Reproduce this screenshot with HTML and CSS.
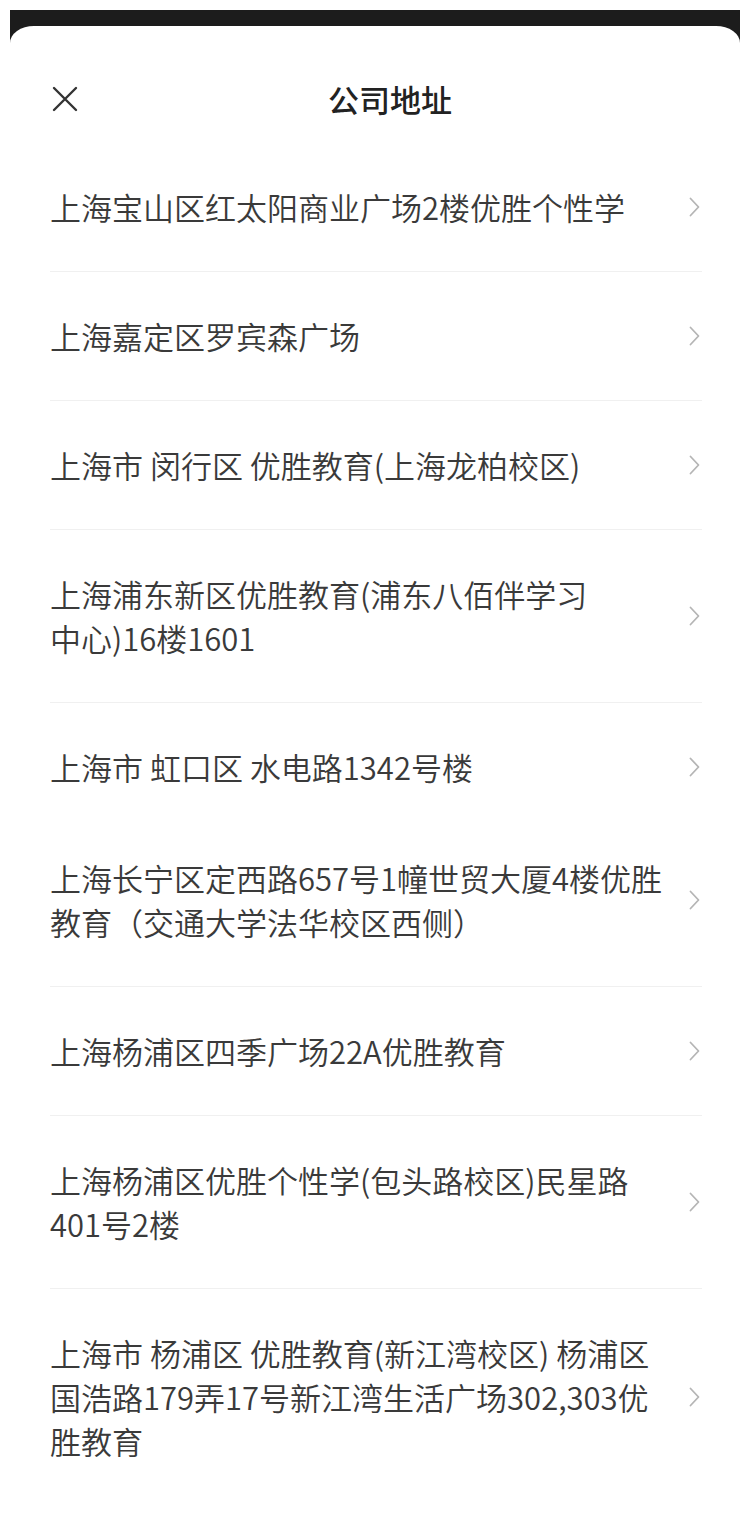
FILE: index.html
```html
<!DOCTYPE html>
<html lang="zh-CN">
<head>
    <meta charset="UTF-8">
    <meta name="viewport" content="width=device-width, initial-scale=1.0">
    <title>公司地址</title>
    <link rel="stylesheet" href="styles.css">
</head>
<body>
    <div class="frame">
        <div class="sheet">
            <div class="header">
                <button class="close-btn" aria-label="关闭">
                    <svg width="26" height="26" viewBox="0 0 26 26">
                        <path d="M2 2 L24 24 M24 2 L2 24" stroke="#333" stroke-width="2.4" stroke-linecap="round" fill="none"/>
                    </svg>
                </button>
                <h1 class="title">公司地址</h1>
            </div>

            <ul class="address-list">
                <li class="row">
                    <span class="row-text">上海宝山区红太阳商业广场2楼优胜个性学</span>
                    <svg class="chevron" width="11" height="20" viewBox="0 0 11 20"><polyline points="1.5,1.5 9.5,10 1.5,18.5"/></svg>
                </li>
                <li class="row">
                    <span class="row-text">上海嘉定区罗宾森广场</span>
                    <svg class="chevron" width="11" height="20" viewBox="0 0 11 20"><polyline points="1.5,1.5 9.5,10 1.5,18.5"/></svg>
                </li>
                <li class="row">
                    <span class="row-text">上海市 闵行区 优胜教育(上海龙柏校区)</span>
                    <svg class="chevron" width="11" height="20" viewBox="0 0 11 20"><polyline points="1.5,1.5 9.5,10 1.5,18.5"/></svg>
                </li>
                <li class="row">
                    <span class="row-text">上海浦东新区优胜教育(浦东八佰伴学习<br>中心)16楼1601</span>
                    <svg class="chevron" width="11" height="20" viewBox="0 0 11 20"><polyline points="1.5,1.5 9.5,10 1.5,18.5"/></svg>
                </li>
                <li class="row row-plain">
                    <span class="row-text">上海市 虹口区 水电路1342号楼</span>
                    <svg class="chevron" width="11" height="20" viewBox="0 0 11 20"><polyline points="1.5,1.5 9.5,10 1.5,18.5"/></svg>
                </li>
                <li class="row">
                    <span class="row-text">上海长宁区定西路657号1幢世贸大厦4楼优胜<br>教育（交通大学法华校区西侧）</span>
                    <svg class="chevron" width="11" height="20" viewBox="0 0 11 20"><polyline points="1.5,1.5 9.5,10 1.5,18.5"/></svg>
                </li>
                <li class="row">
                    <span class="row-text">上海杨浦区四季广场22A优胜教育</span>
                    <svg class="chevron" width="11" height="20" viewBox="0 0 11 20"><polyline points="1.5,1.5 9.5,10 1.5,18.5"/></svg>
                </li>
                <li class="row">
                    <span class="row-text">上海杨浦区优胜个性学(包头路校区)民星路<br>401号2楼</span>
                    <svg class="chevron" width="11" height="20" viewBox="0 0 11 20"><polyline points="1.5,1.5 9.5,10 1.5,18.5"/></svg>
                </li>
                <li class="row row-last">
                    <span class="row-text">上海市 杨浦区 优胜教育(新江湾校区) 杨浦区<br>国浩路179弄17号新江湾生活广场302,303优<br>胜教育</span>
                    <svg class="chevron" width="11" height="20" viewBox="0 0 11 20"><polyline points="1.5,1.5 9.5,10 1.5,18.5"/></svg>
                </li>
            </ul>
        </div>
    </div>
</body>
</html>
```

FILE: styles.css
```css
body {
    margin: 0;
    padding: 0;
    background-color: #ffffff;
    font-family: "Noto Sans CJK SC", "Noto Sans", sans-serif;
    color: #333;
}

.frame {
    margin: 10px 10px 0;
    padding-top: 16px;
    background-color: #1c1c1c;
}

.sheet {
    background-color: #ffffff;
    border-radius: 24px 24px 0 0 / 17px 17px 0 0;
    padding: 49px 38px 0 40px;
}

.header {
    display: flex;
    align-items: center;
    height: 48px;
    margin-bottom: 20px;
}

.close-btn {
    width: 26px;
    height: 26px;
    margin-left: 2px;
    padding: 0;
    border: none;
    background: none;
    display: flex;
    cursor: pointer;
}

.title {
    flex: 1;
    margin: 0;
    text-align: center;
    font-size: 31px;
    font-weight: 500;
    color: #222;
    line-height: 48px;
}

.address-list {
    list-style: none;
    margin: 0;
    padding: 0;
}

.row {
    display: flex;
    align-items: center;
    padding: 42px 0;
    border-bottom: 1px solid #f0f0f0;
}

.row-plain {
    border-bottom: none;
    padding-bottom: 25px;
}

.row-last {
    border-bottom: none;
}

.row-text {
    flex: 1;
    font-size: 31px;
    font-weight: 350;
    line-height: 44px;
    color: #3a3a3a;
    white-space: nowrap;
}

.chevron {
    flex-shrink: 0;
    margin-right: 2px;
}

.chevron polyline {
    fill: none;
    stroke: #b5b5b5;
    stroke-width: 1.8;
    stroke-linecap: round;
    stroke-linejoin: round;
}
```
